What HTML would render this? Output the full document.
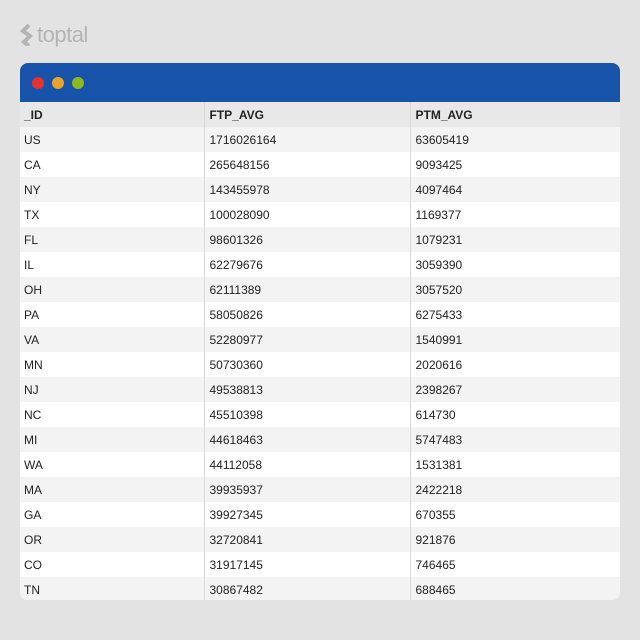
<!DOCTYPE html>
<html><head><style>
body{margin:0;width:640px;height:640px;background:#e3e3e3;font-family:"Liberation Sans",Arial,sans-serif;position:relative;overflow:hidden}
.logo{position:absolute;left:20px;top:22px;color:#b4b4b4;font-size:22px;letter-spacing:-0.5px}
.win{position:absolute;left:20px;top:63px;width:600px;height:537px;background:#fff;border-radius:8px;overflow:hidden}
.bar{height:39px;background:#1753a9;position:relative}
.dot{position:absolute;top:14px;width:12px;height:12px;border-radius:50%}
table{border-collapse:collapse;width:600px;font-size:12px;color:#222}
td{height:25px;padding:0 0 0 5px;box-sizing:border-box;border-left:1px solid #d8d8d8}
td:first-child{border-left:none;padding-left:4px;width:184px}
td:nth-child(2){width:206px}
tr.h td{background:#e8e8e8;font-weight:bold}
tr:nth-child(even) td{background:#f3f3f3}
tr:nth-child(odd):not(.h) td{background:#fff}
</style></head><body>
<div class="logo"><svg width="16" height="22" viewBox="0 0 16 22" style="vertical-align:-4px;margin-right:1px"><path d="M9 1 L3 7 L10 12 L4 18 L9 22" fill="none" stroke="#b4b4b4" stroke-width="4"/></svg>toptal</div>
<div class="win">
<div class="bar"><div class="dot" style="left:12px;background:#e8322f"></div><div class="dot" style="left:32px;background:#e9a32b"></div><div class="dot" style="left:52px;background:#8db81f"></div></div>
<table>
<tr class="h"><td>_ID</td><td>FTP_AVG</td><td>PTM_AVG</td></tr>
<tr><td>US</td><td>1716026164</td><td>63605419</td></tr>
<tr><td>CA</td><td>265648156</td><td>9093425</td></tr>
<tr><td>NY</td><td>143455978</td><td>4097464</td></tr>
<tr><td>TX</td><td>100028090</td><td>1169377</td></tr>
<tr><td>FL</td><td>98601326</td><td>1079231</td></tr>
<tr><td>IL</td><td>62279676</td><td>3059390</td></tr>
<tr><td>OH</td><td>62111389</td><td>3057520</td></tr>
<tr><td>PA</td><td>58050826</td><td>6275433</td></tr>
<tr><td>VA</td><td>52280977</td><td>1540991</td></tr>
<tr><td>MN</td><td>50730360</td><td>2020616</td></tr>
<tr><td>NJ</td><td>49538813</td><td>2398267</td></tr>
<tr><td>NC</td><td>45510398</td><td>614730</td></tr>
<tr><td>MI</td><td>44618463</td><td>5747483</td></tr>
<tr><td>WA</td><td>44112058</td><td>1531381</td></tr>
<tr><td>MA</td><td>39935937</td><td>2422218</td></tr>
<tr><td>GA</td><td>39927345</td><td>670355</td></tr>
<tr><td>OR</td><td>32720841</td><td>921876</td></tr>
<tr><td>CO</td><td>31917145</td><td>746465</td></tr>
<tr><td>TN</td><td>30867482</td><td>688465</td></tr>
</table>
</div>
</body></html>
